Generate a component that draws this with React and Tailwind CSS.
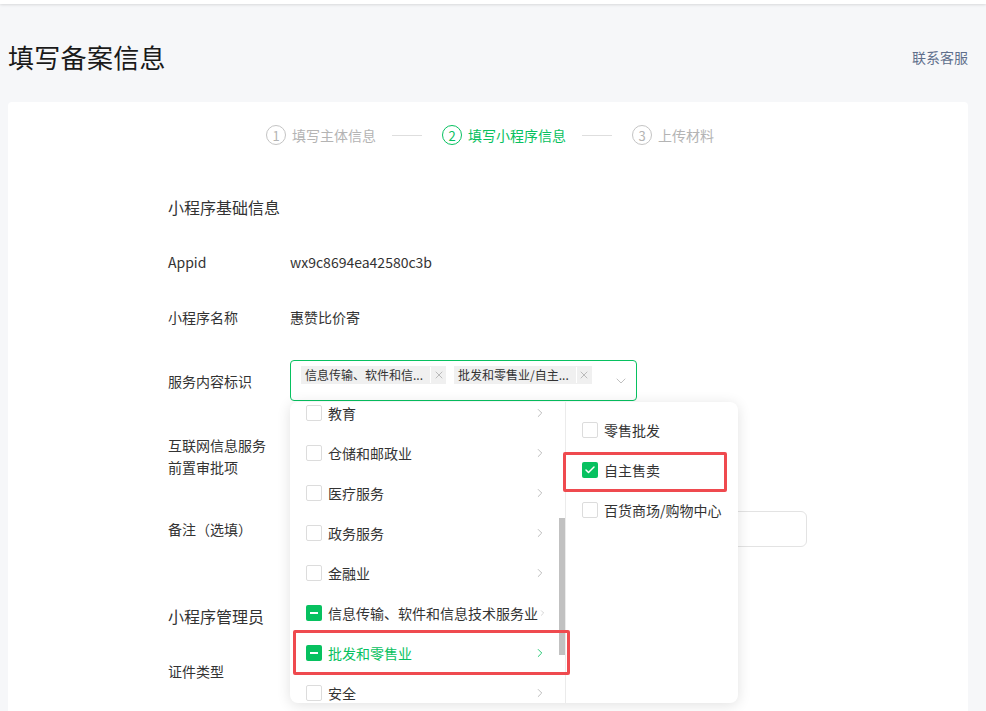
import React from 'react'
import { ChevronRight, ChevronDown, X, Check } from 'lucide-react'

const font = { fontFamily: '"Noto Sans CJK SC", "Noto Sans", sans-serif' }

const leftItems = [
  { name: '教育' },
  { name: '仓储和邮政业' },
  { name: '医疗服务' },
  { name: '政务服务' },
  { name: '金融业' },
  { name: '信息传输、软件和信息技术服务业', state: 'half' },
  { name: '批发和零售业', state: 'half', active: true },
  { name: '安全' },
]

const rightItems = [
  { name: '零售批发' },
  { name: '自主售卖', state: 'checked' },
  { name: '百货商场/购物中心' },
]

function Box({ state }) {
  if (state === 'checked') {
    return (
      <span className="w-4 h-4 rounded-[2px] bg-[#07c160] flex items-center justify-center shrink-0">
        <Check size={12} strokeWidth={3} className="text-white" />
      </span>
    )
  }
  if (state === 'half') {
    return (
      <span className="w-4 h-4 rounded-[2px] bg-[#07c160] flex items-center justify-center shrink-0">
        <span className="w-[8px] h-[2px] bg-white" />
      </span>
    )
  }
  return <span className="w-4 h-4 rounded-[2px] border border-[#dcdcdc] bg-white shrink-0" />
}

function Step({ n, label, active }) {
  const color = active ? 'text-[#07c160] border-[#07c160]' : 'text-[#b4b4b4] border-[#c4c4c4]'
  return (
    <div className={`flex items-center gap-[6px] ${active ? 'text-[#07c160]' : 'text-[#b4b4b4]'}`}>
      <span className={`w-5 h-5 rounded-full border flex items-center justify-center text-[13px] leading-none ${color}`}>{n}</span>
      <span className="text-[14px] leading-5">{label}</span>
    </div>
  )
}

function Tag({ text }) {
  return (
    <div className="flex items-center h-[18px] bg-[#f0f0f0] text-[12px] text-[#333] leading-[18px]">
      <span className="pl-[4px] pr-[7px]">{text}</span>
      <span className="w-px h-[16px] bg-white" />
      <span className="w-[15px] flex items-center justify-center">
        <X size={12} strokeWidth={1.5} className="text-[#a8a8a8]" />
      </span>
    </div>
  )
}

function Dropdown() {
  return (
    <div className="absolute left-0 top-[42px] w-[448px] h-[301px] bg-white rounded-[8px] shadow-[0_2px_14px_rgba(0,0,0,0.12)] flex overflow-hidden z-10">
      <div className="relative w-[276px] border-r border-[#ebebeb] overflow-hidden">
        <div className="mt-[-9px]">
          {leftItems.map((it) => (
            <div key={it.name} className="h-10 flex items-center pl-4 pr-[18px]">
              <Box state={it.state} />
              <span className={`ml-[6px] flex-1 text-[14px] leading-5 whitespace-nowrap ${it.active ? 'text-[#07c160]' : 'text-[#333]'}`}>{it.name}</span>
              <ChevronRight size={14} strokeWidth={1.5} className={it.active ? 'text-[#07c160]' : 'text-[#b4b4b4]'} />
            </div>
          ))}
        </div>
        <div className="absolute right-0 top-[116px] w-[6px] h-[137px] bg-[#c1c1c1]" />
      </div>
      <div className="flex-1 pt-2">
        {rightItems.map((it) => (
          <div key={it.name} className="h-10 flex items-center pl-4">
            <Box state={it.state} />
            <span className="ml-[6px] text-[14px] leading-5 text-[#333] whitespace-nowrap">{it.name}</span>
          </div>
        ))}
      </div>
      <div className="absolute left-[3px] top-[228px] w-[277px] h-[45px] border-[3px] border-[#ef4a4f] rounded-[2px]" />
      <div className="absolute left-[273px] top-[50px] w-[164px] h-[40px] border-[3px] border-[#ef4a4f] rounded-[2px]" />
    </div>
  )
}

function Row({ label, children, className = '' }) {
  return (
    <div className={`flex items-center ${className}`}>
      <div className="w-[122px] text-[14px] leading-6 text-[#333] shrink-0">{label}</div>
      {children}
    </div>
  )
}

export default function App() {
  return (
    <div className="min-h-screen bg-[#f6f7f9] overflow-hidden" style={font}>
      <div className="h-[4px] bg-white shadow-[0_1px_3px_rgba(0,0,0,0.12)]" />
      <div className="pl-2 pr-[18px] pt-[35px]">
        <div className="flex items-center justify-between">
          <h1 className="text-[26px] leading-9 text-[#1a1a1a] font-normal tracking-[0.3px]">填写备案信息</h1>
          <a className="text-[14px] text-[#5f6f8c]">联系客服</a>
        </div>
        <div className="mt-[27px] bg-white rounded-[4px] h-[640px] pt-[23px] pl-[160px]">
          <div className="flex items-center justify-center pr-[156px]">
            <Step n="1" label="填写主体信息" />
            <span className="ml-4 mr-5 w-[30px] h-px bg-[#dedede]" />
            <Step n="2" label="填写小程序信息" active />
            <span className="ml-4 mr-5 w-[30px] h-px bg-[#dedede]" />
            <Step n="3" label="上传材料" />
          </div>

          <div className="mt-[50px] text-[16px] leading-6 text-[#333]">小程序基础信息</div>

          <Row label="Appid" className="mt-[31px]">
            <span className="text-[14px] leading-6 text-[#333]">wx9c8694ea42580c3b</span>
          </Row>
          <Row label="小程序名称" className="mt-[31px]">
            <span className="text-[14px] leading-6 text-[#333]">惠赞比价寄</span>
          </Row>
          <Row label="服务内容标识" className="mt-[31px]">
            <div className="relative">
              <div className="w-[347px] h-[41px] border border-[#07c160] rounded-[4px] flex items-start pl-[10px] pt-[5px] gap-[8px]">
                <Tag text="信息传输、软件和信..." />
                <Tag text="批发和零售业/自主..." />
                <ChevronDown size={16} strokeWidth={1} className="absolute right-[8px] top-[13px] text-[#a0a0a0]" />
              </div>
              <Dropdown />
            </div>
          </Row>
          <div className="mt-[33px] flex">
            <div className="w-[122px] text-[14px] leading-[22px] text-[#333]">
              互联网信息服务
              <br />
              前置审批项
            </div>
          </div>
          <Row label="备注（选填）" className="mt-[33px]">
            <div className="w-[517px] h-[36px] border border-[#e3e3e3] rounded-[6px]" />
          </Row>
          <div className="mt-[57px] text-[16px] leading-6 text-[#333]">小程序管理员</div>
          <Row label="证件类型" className="mt-[31px]">
            <span />
          </Row>
        </div>
      </div>
    </div>
  )
}
